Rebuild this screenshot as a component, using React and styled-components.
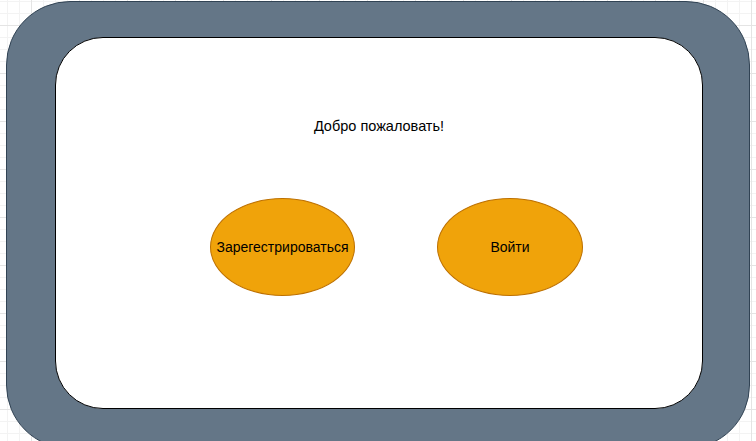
import React from 'react';
import styled, { createGlobalStyle } from 'styled-components';

const GlobalStyle = createGlobalStyle`
  html, body {
    margin: 0;
    padding: 0;
    overflow: hidden;
  }
  body {
    font-family: "Liberation Sans", Arial, sans-serif;
    background-color: #ffffff;
    background-image:
      linear-gradient(to right, #e4e4e4 1px, transparent 1px),
      linear-gradient(to bottom, #e4e4e4 1px, transparent 1px),
      linear-gradient(to right, #f3f3f3 1px, transparent 1px),
      linear-gradient(to bottom, #f3f3f3 1px, transparent 1px);
    background-size: 48px 48px, 48px 48px, 12px 12px, 12px 12px;
    background-position: 31px 25px, 31px 25px, 7px 1px, 7px 1px;
  }
`;

const Canvas = styled.div`
  width: 756px;
  height: 441px;
  padding: 1px 0 0 6px;
  box-sizing: border-box;
  overflow: hidden;
`;

const Frame = styled.div`
  width: 744px;
  height: 448px;
  box-sizing: border-box;
  padding: 35px 46px 0 48px;
  background: #647687;
  border: 1px solid #314354;
  border-radius: 64px;
`;

const Screen = styled.div`
  width: 648px;
  height: 372px;
  box-sizing: border-box;
  background: #ffffff;
  border: 1px solid #000000;
  border-radius: 48px;
  display: flex;
  flex-direction: column;
  align-items: center;
  padding-top: 80px;
`;

const Title = styled.div`
  font-size: 14.5px;
  line-height: 16px;
  color: #000000;
`;

const Actions = styled.div`
  align-self: stretch;
  display: flex;
  gap: 82px;
  padding-left: 154px;
  margin-top: 64px;
`;

const Ellipse = styled.button`
  width: ${p => p.$w}px;
  height: 98px;
  box-sizing: border-box;
  border-radius: 50%;
  background: #f0a30a;
  border: 1px solid #bd7000;
  display: flex;
  align-items: center;
  justify-content: center;
  padding: 0;
  font-family: "Liberation Sans", Arial, sans-serif;
  font-size: 14px;
  color: #000000;
  cursor: pointer;
`;

export default function App() {
  return (
    <>
      <GlobalStyle />
      <Canvas>
        <Frame>
          <Screen>
            <Title>Добро пожаловать!</Title>
            <Actions>
              <Ellipse $w={145}>Зарегестрироваться</Ellipse>
              <Ellipse $w={146}>Войти</Ellipse>
            </Actions>
          </Screen>
        </Frame>
      </Canvas>
    </>
  );
}
